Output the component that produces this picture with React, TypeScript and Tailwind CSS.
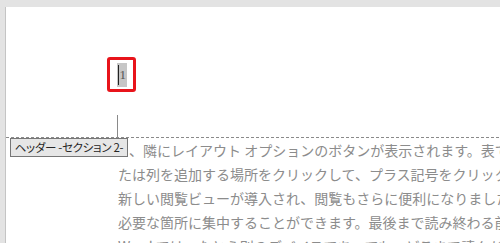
import React from "react";

const lines = [
  "、隣にレイアウト オプションのボタンが表示されます。表で作業する場合は、行ま",
  "たは列を追加する場所をクリックして、プラス記号をクリックします。",
  "新しい閲覧ビューが導入され、閲覧もさらに便利になりました。一部の文書を折りたたんで、",
  "必要な箇所に集中することができます。最後まで読み終わる前にページを閉じる必要がある場合でも、",
  "Word では、たとえ別のデバイスであっても、どこまで読んだかが記憶されます。",
];

export default function App() {
  return (
    <div className="w-[500px] h-[243px] bg-[#e3e3e3] overflow-hidden flex flex-col">
      <div className="ml-[5px] mt-[7px] flex-1 bg-white border-l border-[#c4c4c4] flex flex-col">
        {/* header area */}
        <div className="h-[130px] flex flex-col pl-[101px]">
          <div className="mt-[50px] w-[29px] h-[35px] border-[3px] border-[#e8141b] rounded-[3px] flex items-center justify-center">
            <div className="h-[24px] w-[10px] bg-[#c6c6c6] flex items-center relative">
              <div className="w-px h-[20px] bg-[#222] ml-[1px]"></div>
              <span className="ml-[1px] text-[13px] leading-none text-[#555] [font-family:'Liberation_Serif',serif]">1</span>
            </div>
          </div>
          <div className="mt-auto ml-[10px] w-px h-[22px] bg-[#8a8a8a]"></div>
        </div>
        {/* dashed separator */}
        <div className="h-px bg-[repeating-linear-gradient(to_right,#8a8a8a_0_3px,transparent_3px_5px)]"></div>
        {/* body */}
        <div className="relative flex-1 overflow-hidden">
          <div className="absolute left-[4px] top-0 h-[19px] w-[118px] border border-[#767676] bg-[#e6e6e6] flex items-center justify-center text-[11.5px] tracking-[-0.3px] text-[#262626] [font-family:'Noto_Sans_CJK_JP',sans-serif] [font-feature-settings:'palt'] whitespace-nowrap z-10">
            ヘッダー -セクション 2-
          </div>
          <div className="pl-[112px] [font-family:'Noto_Sans_CJK_JP',serif] text-[14px] text-[#8c8c8c]">
            {lines.map((l, i) => (
              <div key={i} className={`h-[24px] leading-[24px] whitespace-nowrap ${i === 0 ? "pl-[11px]" : ""}`}>
                {l}
              </div>
            ))}
          </div>
        </div>
      </div>
    </div>
  );
}
